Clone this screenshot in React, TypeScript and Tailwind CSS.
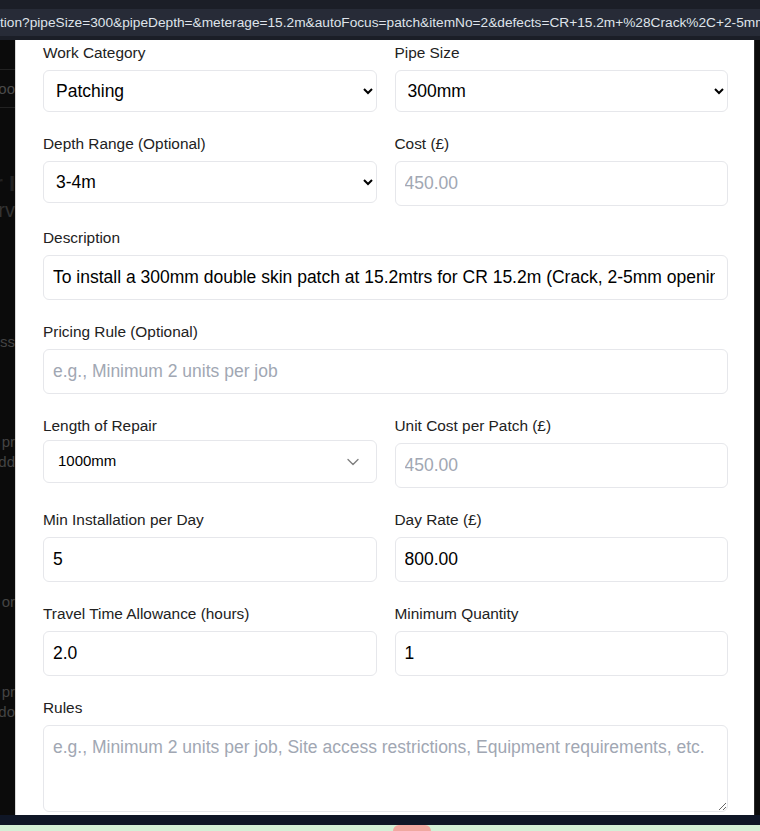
import { ChevronDown } from 'lucide-react'

const labelCls = 'block text-[15.4px] leading-5 text-[#222] mb-[7px]'
const inputCls =
  'block w-full h-[45px] rounded-md border border-[#e6e7eb] bg-white pl-[9px] pr-3 text-[17.5px] text-black placeholder:text-[#a1a7b3] focus:outline-none'
const selectCls =
  'block w-full h-[42px] rounded-md border border-[#e6e7eb] bg-white pl-2 pr-2 text-[17.5px] text-black focus:outline-none'

const desc =
  'To install a 300mm double skin patch at 15.2mtrs for CR 15.2m (Crack, 2-5mm opening) - Patching'

function Field({ label, children }: { label: string; children: React.ReactNode }) {
  return (
    <div>
      <label className={labelCls}>{label}</label>
      {children}
    </div>
  )
}

function GhostStrip() {
  // bits of the page behind the modal, clipped by it
  return (
    <div className="w-[15px] shrink-0 overflow-hidden bg-[#0b0b0b] text-[#3a3a3a] text-[15px] leading-5 flex flex-col items-end whitespace-nowrap">
      <div className="h-[30px] w-full border-b border-[#222]" />
      <div className="h-[38px] w-full border-b border-[#222] flex items-center justify-end text-[#4a4a4a]">oo</div>
      <div className="h-[62px]" />
      <div className="text-[22px] font-bold text-[#222] leading-7">r I</div>
      <div className="text-[20px] text-[#333] leading-6">rv</div>
      <div className="h-[110px]" />
      <div className="text-[#444]">ss</div>
      <div className="h-[80px]" />
      <div className="text-[#444]">pr</div>
      <div className="text-[#444]">dd</div>
      <div className="h-[120px]" />
      <div className="text-[#444]">or</div>
      <div className="h-[70px]" />
      <div className="text-[#444]">pr</div>
      <div className="text-[#444]">do</div>
    </div>
  )
}

export default function App() {
  return (
    <div className="w-[760px] h-[831px] flex flex-col overflow-hidden bg-[#0b0b0b] [font-family:'Liberation_Sans',Arial,sans-serif]">
      {/* browser url bar */}
      <div className="h-[40px] shrink-0 bg-[#1b1e27] pt-[9px]">
        <div className="h-[27px] bg-[#272b37] overflow-hidden whitespace-nowrap text-[13.7px] leading-[27px] text-[#dfe3ea]">
          tion?pipeSize=300&amp;pipeDepth=&amp;meterage=15.2m&amp;autoFocus=patch&amp;itemNo=2&amp;defects=CR+15.2m+%28Crack%2C+2-5mm+opening%29
        </div>
      </div>

      <div className="flex flex-1 min-h-0">
        <GhostStrip />

        <div className="flex-1 bg-white border-l border-[#d9d9d9] overflow-hidden">
          <div className="pl-[27px] pr-[26px] pt-[3px] flex flex-col gap-[22px]">
            <div className="grid grid-cols-2 gap-x-[18px]">
              <Field label="Work Category">
                <select className={selectCls} defaultValue="patching">
                  <option value="patching">Patching</option>
                  <option value="lining">Lining</option>
                </select>
              </Field>
              <Field label="Pipe Size">
                <select className={selectCls} defaultValue="300">
                  <option value="150">150mm</option>
                  <option value="300">300mm</option>
                </select>
              </Field>
            </div>

            <div className="grid grid-cols-2 gap-x-[18px]">
              <Field label="Depth Range (Optional)">
                <select className={selectCls} defaultValue="3-4">
                  <option value="3-4">3-4m</option>
                </select>
              </Field>
              <Field label="Cost (£)">
                <input className={inputCls} placeholder="450.00" />
              </Field>
            </div>

            <Field label="Description">
              <input className={inputCls} value={desc} readOnly />
            </Field>

            <Field label="Pricing Rule (Optional)">
              <input className={inputCls} placeholder="e.g., Minimum 2 units per job" />
            </Field>

            <div className="grid grid-cols-2 gap-x-[18px]">
              <div>
                <label className="block text-[15.4px] leading-5 text-[#222] mb-1">Length of Repair</label>
                <button className="w-full h-[43px] rounded-md border border-[#e6e7eb] bg-white pl-[14px] pr-[13px] flex items-center justify-between text-[15px] text-black">
                  <span>1000mm</span>
                  <ChevronDown className="w-5 h-5 opacity-50" strokeWidth={1.6} />
                </button>
              </div>
              <Field label="Unit Cost per Patch (£)">
                <input className={inputCls} placeholder="450.00" />
              </Field>
            </div>

            <div className="grid grid-cols-2 gap-x-[18px]">
              <Field label="Min Installation per Day">
                <input className={inputCls} defaultValue="5" />
              </Field>
              <Field label="Day Rate (£)">
                <input className={inputCls} defaultValue="800.00" />
              </Field>
            </div>

            <div className="grid grid-cols-2 gap-x-[18px]">
              <Field label="Travel Time Allowance (hours)">
                <input className={inputCls} defaultValue="2.0" />
              </Field>
              <Field label="Minimum Quantity">
                <input className={inputCls} defaultValue="1" />
              </Field>
            </div>

            <Field label="Rules">
              <textarea
                className="block w-full h-[87px] rounded-md border border-[#e6e7eb] bg-white pl-[9px] pr-3 pt-[9px] text-[17.5px] leading-6 text-black placeholder:text-[#a1a7b3] focus:outline-none resize-y"
                placeholder="e.g., Minimum 2 units per job, Site access restrictions, Equipment requirements, etc."
              />
            </Field>
          </div>
        </div>

        <div className="w-[6px] shrink-0 bg-[#0b0b0b] border-l border-[#2a2a2a]" />
      </div>

      <div className="h-[10px] shrink-0 bg-[#0f1626]" />
      <div className="h-[6px] shrink-0 bg-[#d3f0d6] flex pl-[393px]">
        <div className="w-[38px] h-[6px] rounded-t-md bg-[#f0a8a0]" />
      </div>
    </div>
  )
}
